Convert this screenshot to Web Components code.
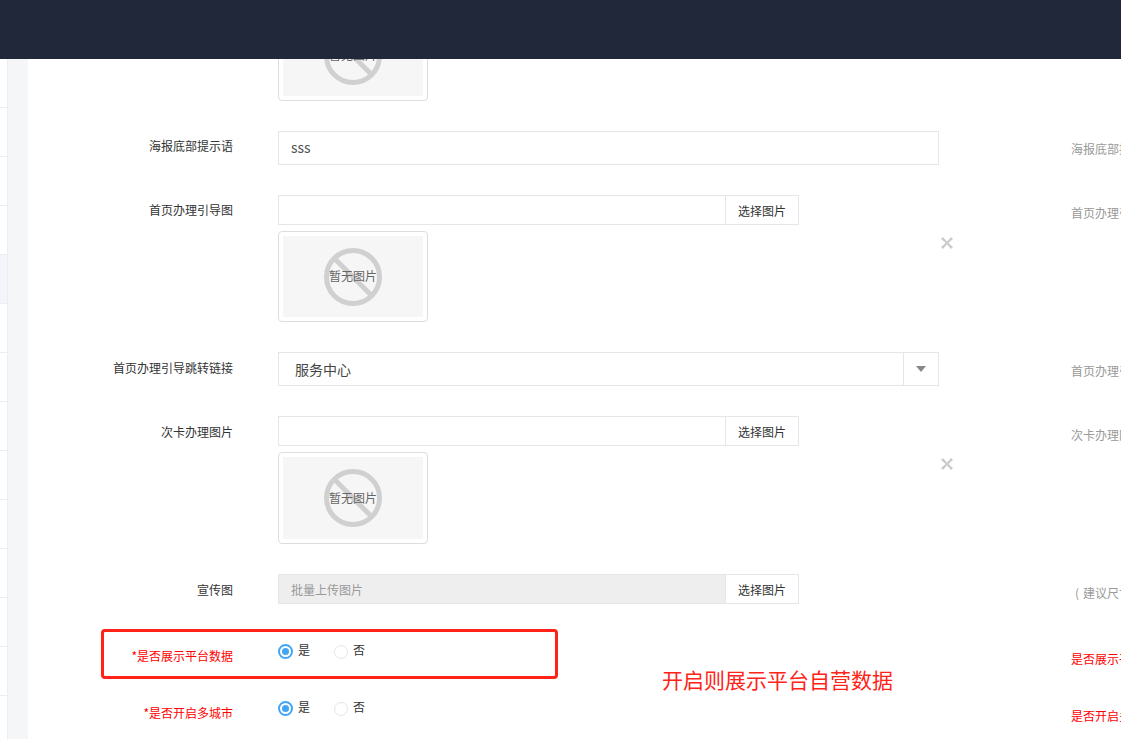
<!DOCTYPE html>
<html lang="zh">
<head>
<meta charset="utf-8">
<title>表单</title>
<style>
    html, body { margin: 0; height: 739px; overflow: hidden; background: #fff; }
    body { font: 12px/18px "Noto Sans CJK SC", "Open Sans", sans-serif; color: #333; }
</style>
</head>
<body>
<app-shell>
    <side-nav slot="nav" rows="14" active="4"></side-nav>

    <form-row>
        <no-image></no-image>
    </form-row>

    <form-row label="海报底部提示语" help="海报底部提示语" tight>
        <text-field value="sss"></text-field>
    </form-row>

    <form-row label="首页办理引导图" help="首页办理引导图" tight removable>
        <image-picker></image-picker>
        <no-image></no-image>
    </form-row>

    <form-row label="首页办理引导跳转链接" help="首页办理引导跳转链接">
        <select-box value="服务中心"></select-box>
    </form-row>

    <form-row label="次卡办理图片" help="次卡办理图片" removable>
        <image-picker></image-picker>
        <no-image tall></no-image>
    </form-row>

    <form-row label="宣传图" help="( 建议尺寸750*400 )" spaced style="--help-pad: 4px; --help-ws: 1.3px">
        <image-picker placeholder="批量上传图片" disabled></image-picker>
    </form-row>

    <form-row label="是否展示平台数据" help="是否展示平台数据" required radio>
        <radio-pair></radio-pair>
    </form-row>

    <form-row label="是否开启多城市" help="是否开启多城市" required radio>
        <radio-pair></radio-pair>
    </form-row>

    <mark-up slot="over"></mark-up>
</app-shell>

<script>
class AppShell extends HTMLElement {
    constructor() {
        super();
        this.attachShadow({mode: 'open'});
        this.shadowRoot.innerHTML = `
            <style>
                :host {
                    display: grid;
                    grid-template-rows: 59px 1fr;
                    height: 739px;
                    position: relative;
                    overflow: hidden;
                }
                header { background: #212839; position: relative; z-index: 1; }
                .body { display: flex; min-height: 0; }
                .strip {
                    width: 20px;
                    flex: none;
                    background: #f5f6f8;
                    border-left: 1px solid #eeeeee;
                }
                main {
                    flex: 1;
                    min-width: 0;
                    overflow: hidden;
                    background: #fff;
                }
                .form { margin-top: -49px; }
            </style>
            <header></header>
            <div class="body">
                <slot name="nav"></slot>
                <div class="strip"></div>
                <main><div class="form"><slot></slot></div></main>
            </div>
            <slot name="over"></slot>
        `;
    }
}

class SideNav extends HTMLElement {
    constructor() {
        super();
        this.attachShadow({mode: 'open'});
        const count = Number(this.getAttribute('rows')) || 0;
        const active = Number(this.getAttribute('active'));
        let rows = '';
        for (let i = 0; i < count; i++) {
            rows += `<div class="row${i === active ? ' on' : ''}"></div>`;
        }
        this.shadowRoot.innerHTML = `
            <style>
                :host { display: block; width: 7px; flex: none; overflow: hidden; background: #fff; }
                .row { height: 48px; border-bottom: 1px solid #eeeeee; }
                .row.on { background: #f3f5fd; }
            </style>
            ${rows}
        `;
    }
}

class FormRow extends HTMLElement {
    constructor() {
        super();
        this.attachShadow({mode: 'open'});
        const label = this.getAttribute('label') || '';
        const help = this.getAttribute('help') || '';
        const required = this.hasAttribute('required');
        const removable = this.hasAttribute('removable');
        const pad = this.hasAttribute('tight') ? 6 : 7;
        this.shadowRoot.innerHTML = `
            <style>
                :host {
                    display: grid;
                    grid-template-columns: 205px 45px 661px 132px 1fr;
                    margin-bottom: ${this.hasAttribute('spaced') ? 36 : 30}px;
                    white-space: nowrap;
                    ${this.hasAttribute('radio') ? 'height: 27px;' : ''}
                }
                .label {
                    grid-column: 1;
                    text-align: right;
                    padding-top: ${pad}px;
                    color: ${required ? '#ff0000' : '#333'};
                }
                .control { grid-column: 3; display: flex; flex-direction: column; gap: 6px; }
                .remove { grid-column: 4; padding: 42px 0 0 2px; line-height: 0; }
                .help {
                    grid-column: 5;
                    padding-top: ${pad + 3}px;
                    padding-left: var(--help-pad, 0);
                    word-spacing: var(--help-ws, normal);
                    color: ${required ? '#ff0000' : '#999'};
                    overflow: hidden;
                }
                svg { display: block; }
            </style>
            <div class="label">${required ? '*' : ''}${label}</div>
            <div class="control"><slot></slot></div>
            ${removable ? `<div class="remove">
                <svg width="12" height="12" viewBox="0 0 12 12">
                    <path d="M0 2 L2 0 L6 4.6 L10 0 L12 2 L7.4 6 L12 10 L10 12 L6 7.4 L2 12 L0 10 L4.6 6 Z" fill="#cccccc"/>
                </svg></div>` : ''}
            <div class="help">${help}</div>
        `;
    }
}

class TextField extends HTMLElement {
    constructor() {
        super();
        this.attachShadow({mode: 'open'});
        this.shadowRoot.innerHTML = `
            <style>
                :host {
                    display: block;
                    box-sizing: border-box;
                    height: 34px;
                    border: 1px solid #e5e6e7;
                    padding: 0 12px;
                    font-size: 14px;
                    line-height: 31px;
                    color: #555;
                }
            </style>
            ${this.getAttribute('value') || ''}
        `;
    }
}

class ImagePicker extends HTMLElement {
    constructor() {
        super();
        this.attachShadow({mode: 'open'});
        const disabled = this.hasAttribute('disabled');
        this.shadowRoot.innerHTML = `
            <style>
                :host { display: flex; width: 521px; height: 30px; box-sizing: border-box; }
                .input {
                    flex: 1;
                    box-sizing: border-box;
                    border: 1px solid #e5e6e7;
                    border-right: 0;
                    padding: 0 12px;
                    line-height: 30px;
                    color: #999;
                    background: ${disabled ? '#eeeeee' : '#fff'};
                }
                .btn {
                    width: 74px;
                    box-sizing: border-box;
                    border: 1px solid #e5e6e7;
                    text-align: center;
                    line-height: 30px;
                    height: 30px;
                    color: #333;
                }
            </style>
            <div class="input">${this.getAttribute('placeholder') || ''}</div>
            <div class="btn">选择图片</div>
        `;
    }
}

class NoImage extends HTMLElement {
    constructor() {
        super();
        this.attachShadow({mode: 'open'});
        const height = this.hasAttribute('tall') ? 92 : 91;
        this.shadowRoot.innerHTML = `
            <style>
                :host {
                    display: block;
                    box-sizing: border-box;
                    width: 150px;
                    height: ${height}px;
                    border: 1px solid #dddddd;
                    border-radius: 4px;
                    padding: 4px;
                }
                .pic {
                    height: 100%;
                    background: #f6f6f6;
                    display: grid;
                    place-items: center;
                }
                .pic > * { grid-area: 1 / 1; }
                span { color: #666; line-height: 16px; margin-top: -1px; }
                svg { display: block; }
            </style>
            <div class="pic">
                <svg width="60" height="60" viewBox="0 0 60 60">
                    <circle cx="30" cy="30" r="26.5" fill="none" stroke="#d0d0d0" stroke-width="5"/>
                    <path d="M11.5 11.5 L48.5 48.5" stroke="#d0d0d0" stroke-width="5"/>
                </svg>
                <span>暂无图片</span>
            </div>
        `;
    }
}

class SelectBox extends HTMLElement {
    constructor() {
        super();
        this.attachShadow({mode: 'open'});
        this.shadowRoot.innerHTML = `
            <style>
                :host {
                    display: flex;
                    box-sizing: border-box;
                    height: 34px;
                    border: 1px solid #e5e6e7;
                }
                .value { flex: 1; padding-left: 16px; font-size: 14px; line-height: 33px; color: #444; }
                .arrow {
                    width: 34px;
                    border-left: 1px solid #e5e6e7;
                    display: flex;
                    align-items: center;
                    justify-content: center;
                }
                svg { display: block; }
            </style>
            <div class="value">${this.getAttribute('value') || ''}</div>
            <div class="arrow">
                <svg width="10" height="6" viewBox="0 0 10 6"><path d="M0 0 H10 L5 6 Z" fill="#888888"/></svg>
            </div>
        `;
    }
}

class RadioPair extends HTMLElement {
    constructor() {
        super();
        this.attachShadow({mode: 'open'});
        this.shadowRoot.innerHTML = `
            <style>
                :host { display: flex; padding-top: 2px; height: 18px; }
                .item { display: flex; align-items: center; }
                .yes { width: 56px; }
                .dot {
                    width: 14px;
                    height: 14px;
                    box-sizing: border-box;
                    border-radius: 50%;
                    border: 1px solid #e5e6e7;
                    margin: 1px 5px 0 0;
                }
                .checked {
                    width: 15px;
                    height: 15px;
                    border: 2px solid #42a5f5;
                    display: grid;
                    place-items: center;
                }
                .checked::after {
                    content: "";
                    width: 7px;
                    height: 7px;
                    border-radius: 50%;
                    background: #42a5f5;
                }
                span { color: #333; margin-top: -2px; }
            </style>
            <div class="item yes"><div class="dot checked"></div><span>是</span></div>
            <div class="item"><div class="dot"></div><span>否</span></div>
        `;
    }
}

// hand-drawn annotation over the screenshot
class MarkUp extends HTMLElement {
    constructor() {
        super();
        this.attachShadow({mode: 'open'});
        this.shadowRoot.innerHTML = `
            <style>
                :host { display: block; }
                .box {
                    position: absolute;
                    left: 101px;
                    top: 629px;
                    width: 457px;
                    height: 50px;
                    box-sizing: border-box;
                    border: 3px solid #ff2318;
                    border-radius: 4px;
                }
                .note {
                    position: absolute;
                    left: 662px;
                    top: 664px;
                    font-size: 21px;
                    line-height: 30px;
                    color: #ff2318;
                    white-space: nowrap;
                }
            </style>
            <div class="box"></div>
            <div class="note">开启则展示平台自营数据</div>
        `;
    }
}

customElements.define('app-shell', AppShell);
customElements.define('side-nav', SideNav);
customElements.define('form-row', FormRow);
customElements.define('text-field', TextField);
customElements.define('image-picker', ImagePicker);
customElements.define('no-image', NoImage);
customElements.define('select-box', SelectBox);
customElements.define('radio-pair', RadioPair);
customElements.define('mark-up', MarkUp);
</script>
</body>
</html>
